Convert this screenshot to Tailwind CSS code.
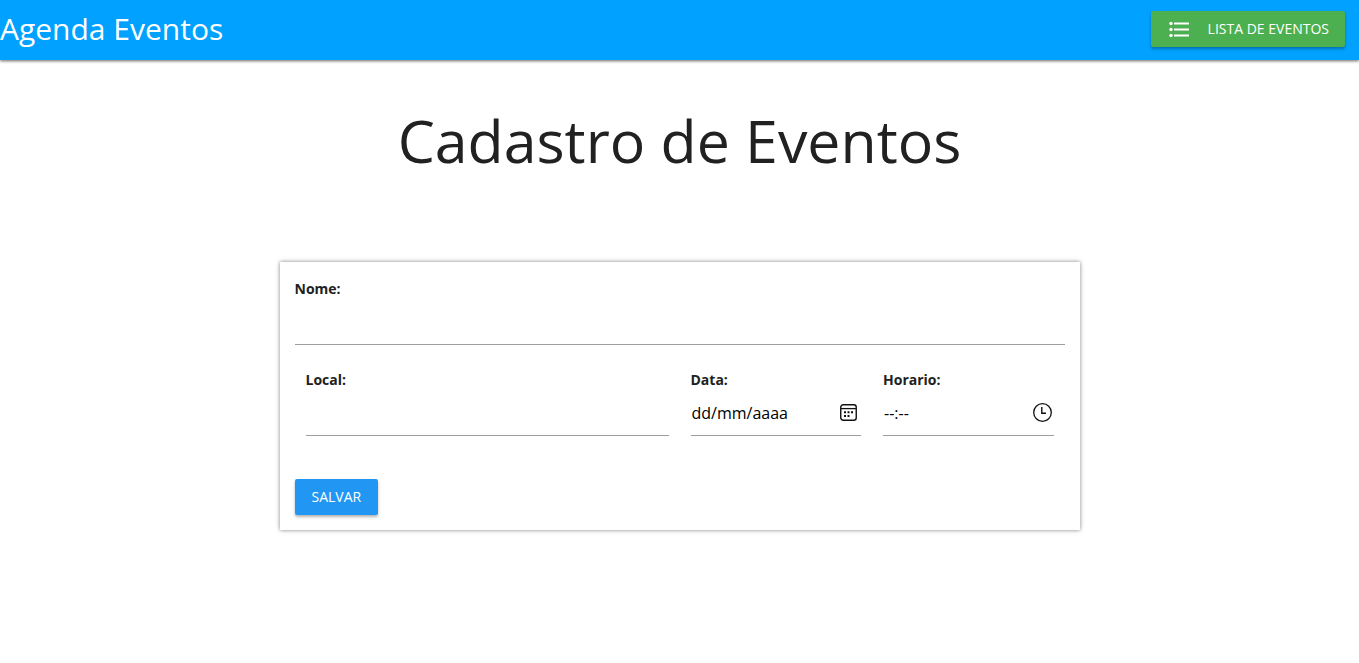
<!DOCTYPE html>
<html lang="pt-BR">
<head>
<meta charset="utf-8">
<meta name="viewport" content="width=device-width, initial-scale=1">
<title>Agenda Eventos</title>
<script src="https://cdn.jsdelivr.net/npm/@tailwindcss/browser@4"></script>
</head>
<body class="bg-white font-['Segoe_UI','Open_Sans',sans-serif] text-base text-[#212121]">
<header class="flex h-[60px] items-center justify-between bg-[#00a1ff] pr-3.5 pb-0.5 shadow-[0_1px_3px_rgba(0,0,0,0.6)]">
  <a href="#" class="text-[30px] leading-[58px] text-white">Agenda Eventos</a>
  <button type="button" class="flex h-9 items-center rounded-xs bg-[#4caf50] px-4 text-sm text-white shadow-[0_2px_3px_rgba(0,0,0,0.3)]">
    <svg class="mr-4 size-[25px]" viewBox="0 0 25 25" fill="currentColor" aria-hidden="true">
      <circle cx="4" cy="6.5" r="1.7"/><circle cx="4" cy="12.5" r="1.7"/><circle cx="4" cy="18.5" r="1.7"/>
      <path d="M7 5.5h15v2H7zM7 11.5h15v2H7zM7 17.5h15v2H7z"/>
    </svg>
    LISTA DE EVENTOS
  </button>
</header>
<main class="pb-8">
  <h1 class="pt-[45px] text-center text-[59px] leading-[70px]">Cadastro de Eventos</h1>
  <form class="mx-auto mt-[87px] max-w-[800px] bg-white p-[15px] shadow-[0_0_4px_rgba(0,0,0,0.5)]">
    <label for="nome" class="block text-sm leading-6 font-bold">Nome:</label>
    <input id="nome" type="text" class="block h-11 w-full border-b border-[#9e9e9e] outline-none">
    <div class="mt-[23px] grid grid-cols-4">
      <div class="col-span-2 px-[11px]">
        <label for="local" class="block text-sm leading-6 font-bold">Local:</label>
        <input id="local" type="text" class="block h-11 w-full border-b border-[#9e9e9e] outline-none">
      </div>
      <div class="px-[11px]">
        <label for="data" class="block text-sm leading-6 font-bold">Data:</label>
        <div class="flex h-11 items-center border-b border-[#9e9e9e] pr-1 pb-0.5">
          <input id="data" type="text" placeholder="dd/mm/aaaa" class="h-full w-full min-w-0 pl-px outline-none placeholder:text-black">
          <button type="button" aria-label="Abrir calendário" class="shrink-0">
            <svg class="block size-[17px]" viewBox="0 0 17 17" aria-hidden="true">
              <rect x="0.75" y="0.75" width="15.5" height="15.5" rx="2.5" fill="none" stroke="#111" stroke-width="1.4"/>
              <path d="M1 4.6h15" stroke="#111" stroke-width="1.3"/>
              <path d="M4 7.3h2v2H4zM7.5 7.3h2v2h-2zM11 7.3h2v2h-2zM4 11h2v2H4zM7.5 11h2v2h-2z" fill="#111"/>
            </svg>
          </button>
        </div>
      </div>
      <div class="px-[11px]">
        <label for="horario" class="block text-sm leading-6 font-bold">Horario:</label>
        <div class="flex h-11 items-center border-b border-[#9e9e9e] pr-0.5 pb-0.5">
          <input id="horario" type="text" placeholder="--:--" class="h-full w-full min-w-0 pl-px outline-none placeholder:text-black">
          <button type="button" aria-label="Abrir relógio" class="shrink-0">
            <svg class="block size-[19px]" viewBox="0 0 19 19" fill="none" stroke="#111" aria-hidden="true">
              <circle cx="9.5" cy="9.5" r="8.8" stroke-width="1.3"/>
              <path d="M8.8 4v6.3H13" stroke-width="1.4"/>
            </svg>
          </button>
        </div>
      </div>
    </div>
    <button type="submit" class="mt-[43px] block h-9 rounded-xs bg-[#2196f3] px-[17px] text-sm text-white shadow-[0_2px_3px_rgba(0,0,0,0.3)]">SALVAR</button>
  </form>
</main>
</body>
</html>
